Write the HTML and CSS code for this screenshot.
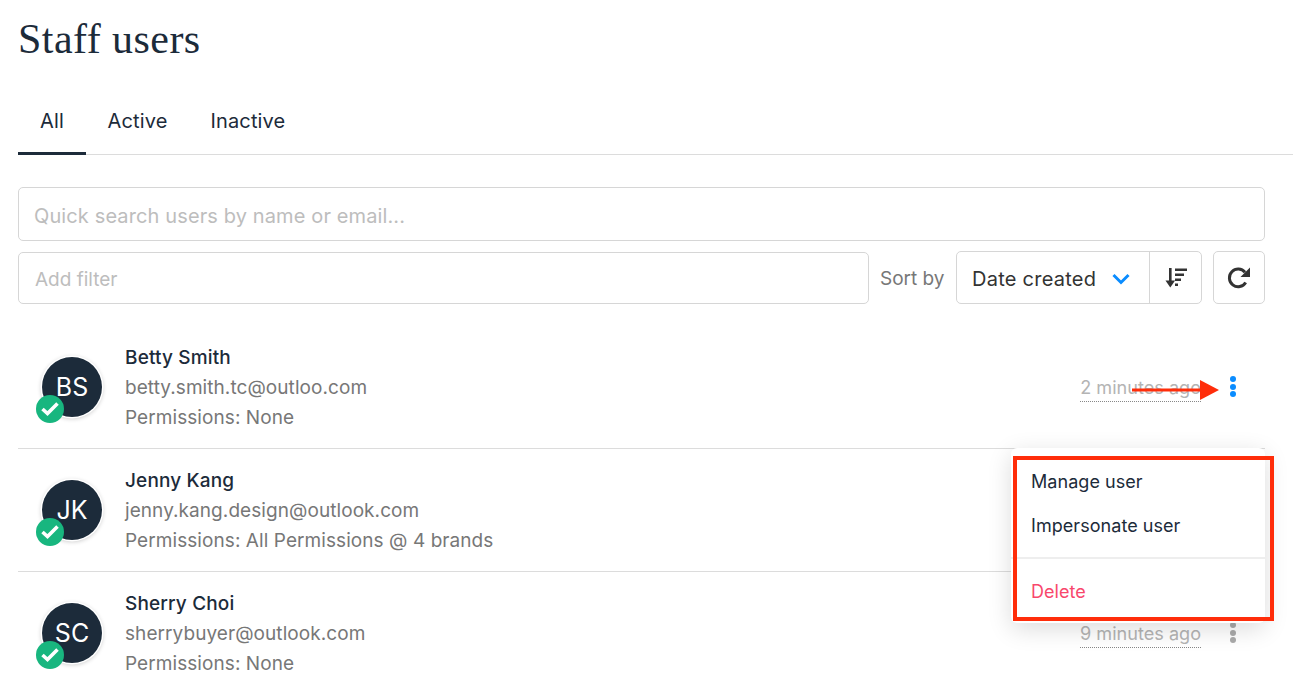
FILE: index.html
```html
<!DOCTYPE html>
<html lang="en">
<head>
<meta charset="utf-8">
<title>Staff users</title>
<link rel="stylesheet" href="styles.css">
</head>
<body>
<main class="page">
  <h1 class="title">Staff users</h1>
  <nav class="tabs">
    <a class="tab tab-active">All</a>
    <a class="tab">Active</a>
    <a class="tab">Inactive</a>
  </nav>
  <div class="controls">
    <div class="field search">Quick search users by name or email...</div>
    <div class="filter-row">
      <div class="field filter">Add filter</div>
      <span class="sort-label">Sort by</span>
      <div class="sort-box">
        <div class="sort-select">
          <span>Date created</span>
          <svg class="chevron" width="18" height="12" viewBox="0 0 18 12"><path d="M1.500 2 9 9.500 16.500 2" fill="none" stroke="#0a8cff" stroke-width="3"/></svg>
        </div>
        <div class="sort-order">
          <svg width="24" height="22" viewBox="0 0 24 22" fill="#333"><path d="M5 1h2.600v14H5z"/><path d="M1.500 13.500h9.600L6.300 20.500z"/><path d="M11 1.500h12v2.600H11zM11 6.500h9v2.600h-9zM11 11.500h6v2.600h-6zM11 16.500h3v2.600h-3z"/></svg>
        </div>
      </div>
      <button class="refresh" type="button">
        <svg width="24" height="24" viewBox="0 0 24 24"><path d="M18.700 16.500A8.800 8.800 0 1 1 18 6.300" fill="none" stroke="#333" stroke-width="3"/><path d="M23 1.500v9.500h-9.500z" fill="#333"/></svg>
      </button>
    </div>
  </div>
  <ul class="users">
    <li class="user">
      <div class="avatar">BS<span class="badge"><svg width="20" height="16" viewBox="0 0 20 16"><path d="M2.500 8 7.500 12.500 17.500 2.500" fill="none" stroke="#fff" stroke-width="3.600"/></svg></span></div>
      <div class="info">
        <div class="name">Betty Smith</div>
        <div class="meta">betty.smith.tc@outloo.com</div>
        <div class="meta">Permissions: None</div>
      </div>
      <span class="time">2 minutes ago</span>
      <span class="dots dots-active"><i></i><i></i><i></i></span>
    </li>
    <li class="user">
      <div class="avatar">JK<span class="badge"><svg width="20" height="16" viewBox="0 0 20 16"><path d="M2.500 8 7.500 12.500 17.500 2.500" fill="none" stroke="#fff" stroke-width="3.600"/></svg></span></div>
      <div class="info">
        <div class="name">Jenny Kang</div>
        <div class="meta">jenny.kang.design@outlook.com</div>
        <div class="meta">Permissions: All Permissions @ 4 brands</div>
      </div>
    </li>
    <li class="user">
      <div class="avatar">SC<span class="badge"><svg width="20" height="16" viewBox="0 0 20 16"><path d="M2.500 8 7.500 12.500 17.500 2.500" fill="none" stroke="#fff" stroke-width="3.600"/></svg></span></div>
      <div class="info">
        <div class="name">Sherry Choi</div>
        <div class="meta">sherrybuyer@outlook.com</div>
        <div class="meta">Permissions: None</div>
      </div>
      <span class="time">9 minutes ago</span>
      <span class="dots"><i></i><i></i><i></i></span>
    </li>
  </ul>
  <div class="menu">
    <div class="menu-item">Manage user</div>
    <div class="menu-item">Impersonate user</div>
    <div class="menu-sep"></div>
    <div class="menu-item menu-danger">Delete</div>
  </div>
  <div class="highlight"></div>
  <svg class="arrow" width="90" height="24" viewBox="0 0 90 24"><path d="M0 10.500h68v3H0z" fill="#ff2d0a"/><path d="M68 2l19 10-19 10z" fill="#ff2d0a"/></svg>
</main>
</body>
</html>
```
FILE: styles.css
```css
* { box-sizing: border-box; }
html, body { margin: 0; height: 100%; overflow: hidden; background: #fff; }
body { font-family: Inter, "Liberation Sans", sans-serif; color: #1c2b3a; }
.page { position: relative; height: 680px; padding-left: 18px; overflow: hidden; }
.title {
  margin: 0;
  height: 90px;
  padding-top: 14px;
  font-family: "Liberation Serif", serif;
  font-weight: 400;
  font-size: 42px;
  line-height: 50px;
  letter-spacing: 0.45px;
  color: #1c2b3a;
}
.tabs { display: flex; height: 65px; border-bottom: 1px solid #dcdcdc; }
.tab {
  padding: 0 21.500px;
  font-size: 20px;
  line-height: 62px;
  height: 65px;
  letter-spacing: 0.15px;
  color: #1c2b3a;
}
.tab-active { padding: 0 22px; border-bottom: 3px solid #1c2b3a; }
.controls { width: 1247px; margin-top: 32px; display: flex; flex-direction: column; gap: 10px; }
.field {
  border: 1px solid #d6d6d6;
  border-radius: 5px;
  color: #bdbdbd;
  display: flex;
  align-items: center;
  font-size: 20px;
}
.search { height: 54px; padding: 3px 0 0 15px; letter-spacing: 0.12px; }
.filter-row { display: flex; align-items: flex-end; height: 53px; }
.filter { width: 851px; height: 52px; padding: 2px 0 0 16px; font-size: 19px; }
.sort-label { align-self: center; margin-left: 11px; padding-top: 2px; width: 76px; font-size: 19px; color: #777; }
.sort-box {
  display: flex;
  width: 246px;
  height: 53px;
  border: 1px solid #d6d6d6;
  border-radius: 5px;
  margin-right: 11px;
}
.sort-select {
  width: 193px;
  display: flex;
  align-items: center;
  justify-content: space-between;
  padding: 2px 19px 0 15px;
  font-size: 20px;
  letter-spacing: 0.25px;
  color: #333;
  border-right: 1px solid #d6d6d6;
}
.sort-order { flex: 1; display: flex; align-items: center; justify-content: center; }
.refresh {
  width: 52px;
  height: 53px;
  padding: 0;
  background: #fff;
  border: 1px solid #d6d6d6;
  border-radius: 5px;
  display: flex;
  align-items: center;
  justify-content: center;
}
.users { list-style: none; margin: 22px 0 0; padding: 0; width: 1247px; }
.user {
  height: 123px;
  display: flex;
  align-items: flex-start;
  border-bottom: 1px solid #dcdcdc;
}
.avatar {
  position: relative;
  margin: 31px 0 0 24px;
  width: 60px;
  height: 60px;
  flex: none;
  border-radius: 50%;
  background: #1c2b3a;
  box-shadow: 0 0 0 1.500px #fff, 0 1px 4px 1px rgba(0,0,0,.2);
  color: #fff;
  font-size: 25px;
  display: flex;
  align-items: center;
  justify-content: center;
}
.badge {
  position: absolute;
  left: -6px;
  top: 38px;
  width: 28px;
  height: 28px;
  border-radius: 50%;
  background: #18b67f;
  display: flex;
  align-items: center;
  justify-content: center;
}
.info { margin-left: 23px; padding-top: 17px; flex: 1; }
.name { font-size: 19px; font-weight: 500; line-height: 30px; letter-spacing: 0.15px; color: #1c2b3a; }
.meta { font-size: 19px; line-height: 30px; letter-spacing: 0.07px; color: #777; }
.time {
  margin-top: 48px;
  font-size: 18.100px;
  line-height: 27px;
  color: #b4b4b4;
  border-bottom: 1px dotted #888;
}
.dots { margin: 50px 29px 0 29px; display: flex; flex-direction: column; gap: 1.500px; width: 6px; }
.dots i { display: block; width: 6px; height: 6px; border-radius: 50%; background: #aaa; }
.dots-active i { background: #0a8cff; }
.menu {
  position: absolute;
  left: 1011px;
  top: 448px;
  width: 254px;
  height: 175px;
  background: #fff;
  border-radius: 6px;
  box-shadow: 0 6px 24px rgba(0,0,0,.14);
  padding-top: 12px;
}
.menu-item { padding-left: 20px; font-size: 18px; line-height: 44px; height: 44px; letter-spacing: 0.05px; color: #1c2b3a; }
.menu-sep { height: 2px; background: #eee; margin: 9px 0 11px; }
.menu-danger { color: #f8476c; }
.highlight {
  position: absolute;
  left: 1013px;
  top: 456px;
  width: 261px;
  height: 165px;
  border: 4px solid #ff2d0a;
}
.arrow { position: absolute; left: 1132px; top: 378px; }
```
